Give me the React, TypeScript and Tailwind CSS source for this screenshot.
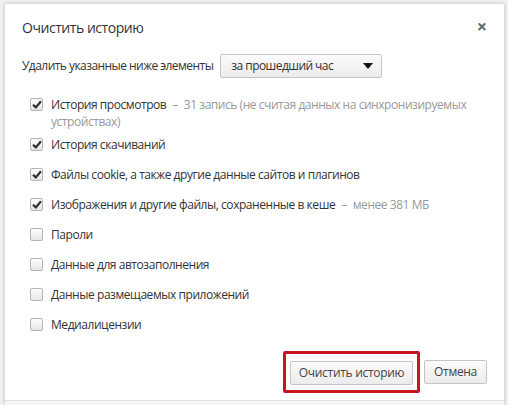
import React from "react";

type Item = { label: string; note?: string; checked: boolean };

const items: Item[] = [
  {
    label: "История просмотров",
    note: "31 запись (не считая данных на синхронизируемых устройствах)",
    checked: true,
  },
  { label: "История скачиваний", checked: true },
  { label: "Файлы cookie, а также другие данные сайтов и плагинов", checked: true },
  {
    label: "Изображения и другие файлы, сохраненные в кеше",
    note: "менее 381 МБ",
    checked: true,
  },
  { label: "Пароли", checked: false },
  { label: "Данные для автозаполнения", checked: false },
  { label: "Данные размещаемых приложений", checked: false },
  { label: "Медиалицензии", checked: false },
];

const Checkbox = ({ checked }: { checked: boolean }) => (
  <span className="mt-[2px] flex h-[13px] w-[13px] shrink-0 items-center justify-center rounded-[2px] border border-[#b5b5b5] bg-gradient-to-b from-[#fdfdfd] to-[#e6e6e6]">
    {checked && (
      <svg width="10" height="9" viewBox="0 0 10 9">
        <path d="M1 4.8 L3.8 7.4 L9 1.2" fill="none" stroke="#303030" strokeWidth="2.2" />
      </svg>
    )}
  </span>
);

const App = () => {
  return (
    <div
      className="flex h-[405px] w-[508px] flex-col overflow-hidden bg-[#f2f2f2] pl-[5px] pr-[4px] pt-[4px]"
      style={{ fontFamily: '"Open Sans", "Noto Sans", sans-serif' }}
    >
      <div className="flex flex-1 flex-col bg-white shadow-[0_0_4px_rgba(0,0,0,0.25)]">
        <div className="flex items-start justify-between pl-[17px] pr-[17px] pt-[14px]">
          <h1 className="text-[14px] leading-[20px] tracking-[-0.45px] text-[#333]">Очистить историю</h1>
          <span className="mt-[-2px] text-[18px] font-bold leading-[20px] text-[#666]">×</span>
        </div>

        <div className="mt-[16px] flex items-center gap-[7px] pl-[17px] text-[12px] tracking-[-0.55px] text-[#333]">
          <span>Удалить указанные ниже элементы</span>
          <div className="flex h-[24px] w-[162px] items-center justify-between rounded-[2px] border border-[#c5c5c5] bg-gradient-to-b from-[#fbfbfb] to-[#ececec] pl-[10px] pr-[8px]">
            <span className="text-[#333]">за прошедший час</span>
            <svg width="10" height="6" viewBox="0 0 10 6">
              <path d="M0 0 L10 0 L5 6 Z" fill="#111" />
            </svg>
          </div>
        </div>

        <div className="mt-[18px] flex flex-col pl-[25px] pr-[34px] text-[12px] leading-[17px] tracking-[-0.45px] text-[#333]">
          {items.map((it, i) => (
            <div
              key={i}
              className={`flex gap-[8px] ${i === 0 ? "" : i === 1 ? "mt-[6px]" : "mt-[13px]"}`}
            >
              <Checkbox checked={it.checked} />
              <p>
                <span>{it.label}</span>
                {it.note && (
                  <>
                    <span className="mx-[6px] text-[#999]">–</span>
                    <span className="text-[#999]">{it.note}</span>
                  </>
                )}
              </p>
            </div>
          ))}
        </div>

        <div className="mt-auto flex items-center justify-end gap-[4px] pb-[7px] pr-[17px]">
          <div className="rounded-[2px] border-[3px] border-[#c8161d] px-[4px] py-[5px]">
            <button className="h-[24px] w-[123px] rounded-[2px] border border-[#c5c5c5] bg-gradient-to-b from-[#fbfbfb] to-[#ececec] text-[12px] tracking-[-0.3px] text-[#444]">
              Очистить историю
            </button>
          </div>
          <button className="h-[24px] w-[63px] rounded-[2px] border border-[#c5c5c5] bg-gradient-to-b from-[#fbfbfb] to-[#ececec] text-[12px] tracking-[-0.3px] text-[#444]">
            Отмена
          </button>
        </div>

        <div className="h-[5px] border-t border-[#e0e0e0] bg-[#f5f5f5]" />
      </div>
    </div>
  );
};

export default App;
